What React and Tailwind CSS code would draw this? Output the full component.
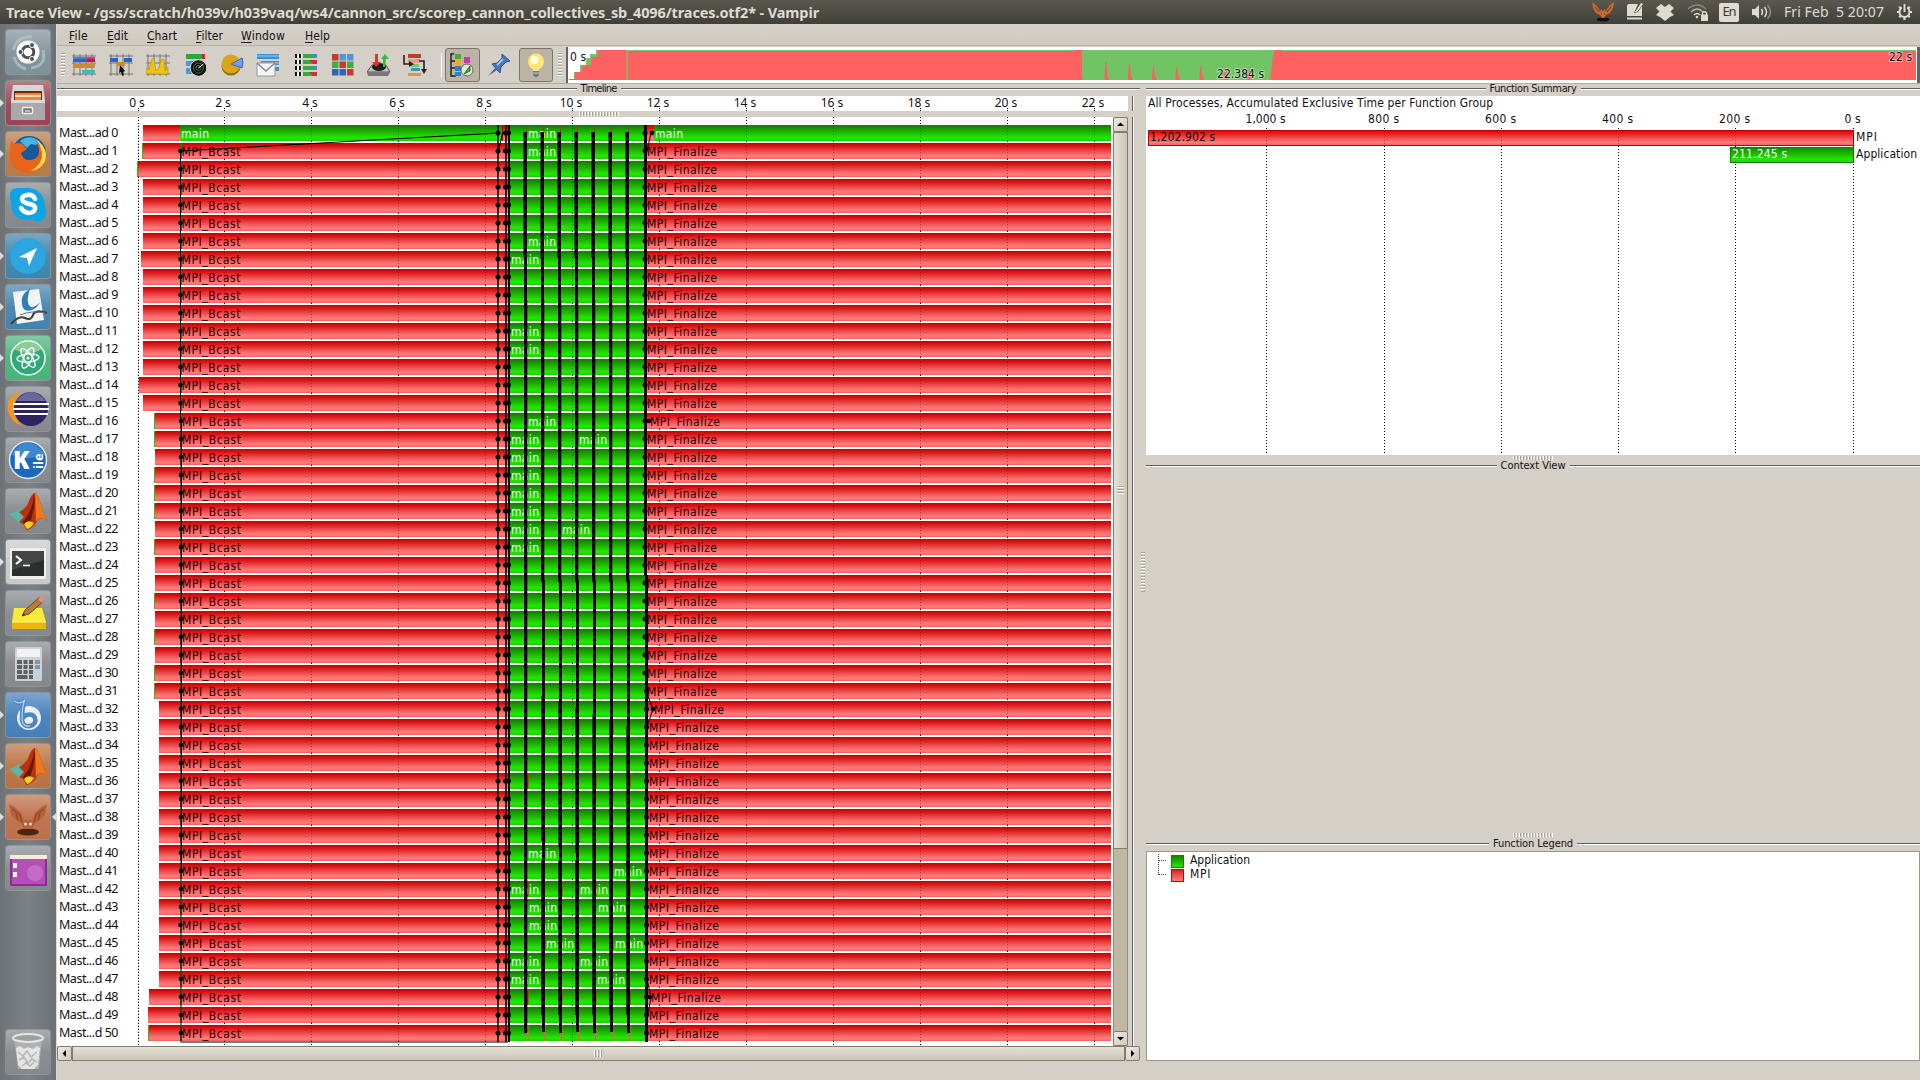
import React, { useLayoutEffect, useRef } from "react";

const UI = "font-['DejaVu_Sans_Condensed','DejaVu_Sans',sans-serif]";

/* One line of text whose letter spacing is adjusted so that it spans w pixels. */
function Fit({ w, className = "", children }) {
  const ref = useRef(null);
  useLayoutEffect(() => {
    const el = ref.current;
    el.style.letterSpacing = "0px";
    const n = el.textContent.length;
    el.style.letterSpacing = (w - el.getBoundingClientRect().width) / n + "px";
  }, [w]);
  return (
    <span ref={ref} className={"inline-block whitespace-pre " + className}>
      {children}
    </span>
  );
}

/* ---------- top panel ---------- */
function TopBar() {
  return (
    <header className="flex h-6 shrink-0 items-center justify-between bg-gradient-to-b from-[#5a584e] to-[#403f39] pl-1.5 pr-[7px] font-['Noto_Sans',sans-serif] text-[#dfdbd2]">
      <Fit w={813} className="text-[14.5px] leading-6 font-bold">
        Trace View - /gss/scratch/h039v/h039vaq/ws4/cannon_src/scorep_cannon_collectives_sb_4096/traces.otf2* - Vampir
      </Fit>
      <div className="flex h-6 items-center">
        <svg width="22" height="20" viewBox="0 0 22 20">
          <ellipse cx="11" cy="17.5" rx="6.500" ry="2" fill="#15130f" />
          <path d="M0 0q2 2 4 3l3 4 1 3 1-3 2 2 2-2 1 3 1-3 3-4 4-3-1 6-3 5-4 2-2 3h-2l-2-3-4-2-3-5z" fill="#c96a33" />
          <path d="M3 5l4 5M19 5l-4 5M9 12h1M12 12h1" stroke="#7c3713" />
        </svg>
        <svg className="ml-[11px]" width="20" height="20" viewBox="0 0 20 20">
          <path d="M4 2h9l-4 9 4-1 4-6v10H2V4q0-2 2-2z" fill="#dfdbd2" />
          <path d="M10 10l6-9 2 1-6 8z" fill="#dfdbd2" />
          <path d="M2 16.500h15" stroke="#dfdbd2" strokeWidth="2" />
        </svg>
        <svg className="ml-[11px]" width="18" height="18" viewBox="0 0 18 18">
          <path d="M5 1l4 3 4-3 5 4-3.500 3.500L18 12l-4 2-5 4-5-4-4-2 3.500-3.500L0 5z" fill="#dfdbd2" />
        </svg>
        <svg className="ml-[14px]" width="21" height="18" viewBox="0 0 21 18">
          <g fill="none" stroke="#8b887f" strokeWidth="1.600">
            <path d="M0 6Q9-2 18 6" />
            <path d="M3 9q6-6 12 0" stroke="#b9b5ab" />
            <path d="M6 12q3-3 6 0" stroke="#dfdbd2" />
          </g>
          <circle cx="9" cy="14" r="1.300" fill="#dfdbd2" />
          <path d="M13 11.500h7V18h-7z" fill="#dfdbd2" />
          <path d="M14.500 12v-2q2-2.500 4 0v2" fill="none" stroke="#dfdbd2" strokeWidth="1.300" />
        </svg>
        <span className="ml-[10px] flex h-[19px] w-5 items-center justify-center rounded-[2px] bg-[#dfdbd2] text-[13px] text-[#3c3b37]">
          <Fit w={13}>En</Fit>
        </span>
        <svg className="ml-3" width="21" height="18" viewBox="0 0 21 18">
          <path d="M1 6h3l4-4v14l-4-4H1z" fill="#dfdbd2" />
          <g fill="none" stroke="#dfdbd2" strokeWidth="1.500">
            <path d="M10.500 6q2 3 0 6" />
            <path d="M13.500 4q4 5 0 10" />
            <path d="M16.500 2q6 7 0 14" stroke="#8b887f" />
          </g>
        </svg>
        <Fit w={100} className="ml-3 text-[14px] leading-6">Fri Feb  5 20:07</Fit>
        <svg className="ml-3" width="17" height="18" viewBox="0 0 17 18">
          <circle cx="8.500" cy="9" r="5" fill="none" stroke="#dfdbd2" strokeWidth="2" />
          <path d="M8.500 14v3M1 9h2M14 9h2M3.200 3.700l1.500 1.500M12.300 12.800l1.500 1.500M3.200 14.300l1.500-1.500M12.300 5.200l1.500-1.500" stroke="#dfdbd2" strokeWidth="2.200" />
          <path d="M8.500 1v8" stroke="#47463f" strokeWidth="5" />
          <path d="M8.500 1v8" stroke="#dfdbd2" strokeWidth="2" />
        </svg>
      </div>
    </header>
  );
}

/* ---------- launcher ---------- */
const matlab = (
  <g>
    <path d="M3 25l12-5 7 6-9 8-4-4z" fill="#5bb5a8" />
    <path d="M13 23q8-4 10-11 3-8 6-8 3 0 6 12 3 12 7 17-8-8-12 1-5 7-10 7-1-6-7-8l5-5z" fill="#b8330c" />
    <path d="M29 4q3 0 6 12 3 12 7 17-8-8-12 0z" fill="#f07a1a" />
    <path d="M28 6q-1 15-11 27l4 7q7-14 8-30z" fill="#6d1608" />
    <path d="M18 35l3 5q4-1 7-6-6-4-10 1z" fill="#ffcf1a" />
  </g>
);

const bat = (
  <g>
    <ellipse cx="22" cy="37" rx="11" ry="3.500" fill="#4d2410" />
    <path d="M3 9q8 4 12 9l3 8 2-2 2 2 2-2 2 2 3-8q4-5 12-9-1 8-3 12l-5 5-4 2-3 6h-8l-3-6-4-2-5-5Q4 17 3 9z" fill="#b5613a" />
    <path d="M6 14l8 6 2 7M38 14l-8 6-2 7M10 19l2 6M34 19l-2 6" stroke="#8f4525" strokeWidth="1.200" fill="none" />
    <circle cx="19.500" cy="29" r="1.500" fill="#f0d8c8" />
    <circle cx="24.500" cy="29" r="1.500" fill="#f0d8c8" />
  </g>
);

const LAUNCHER = [
  { bg: "bg-[#80919a]", icon: (
    <g>
      <path d="M7 20Q12 5 26 7M37 20q4 16-12 18M8 27q3 10 12 12" stroke="#b9c5ca" strokeWidth="3" fill="none" opacity=".7" />
      <circle cx="22" cy="22" r="11.500" fill="#fff" />
      <circle cx="22" cy="22" r="5.800" fill="none" stroke="#4e5052" strokeWidth="3" />
      <g fill="#4e5052" stroke="#fff"><circle cx="14.500" cy="22" r="2.500" /><circle cx="26" cy="15" r="2.500" /><circle cx="26" cy="29" r="2.500" /></g>
    </g>) },
  { bg: "bg-[#9c4454]", run: true, icon: (
    <g>
      <path d="M7 4h30l2 15H5z" fill="#d5d5d5" />
      <path d="M8 10h28v10H8z" fill="#6b2710" />
      <path d="M9 12h26v8H9z" fill="#f08432" /><path d="M9 15h26" stroke="#ffe0c0" strokeWidth="2" />
      <path d="M5 19h34v20H5z" fill="#a9a9a9" /><path d="M5 19h34v3H5z" fill="#d9d9d9" />
      <rect x="16.500" y="26.500" width="10" height="6" rx="1" fill="#777" stroke="#eee" strokeWidth="1.500" /><path d="M19 30h5" stroke="#fff" />
    </g>) },
  { bg: "bg-[#b77a49]", run: true, icon: (
    <g>
      <circle cx="23" cy="21" r="17" fill="#155a9a" />
      <path d="M14 9q10-8 20 1l-4 3-5-1-4 4z" fill="#45b5e6" />
      <path d="M5 9l4 3q3-2 7 0l5 5-6 4q2 8 10 7 8-1 8-9 0-6-4-10 12 7 10 19-3 13-17 13Q7 40 4 27q-1-9 1-18z" fill="#e8641a" />
      <path d="M31 8q12 9 8 21-4 9-14 10 12-7 11-18-1-7-5-13z" fill="#ffd84a" />
    </g>) },
  { bg: "bg-[#85898c]", icon: (
    <g>
      <path d="M13 5q-9-1-9 8 0 4 1 7 0 16 16 17 3 0 4-1 8 6 13-1 4-5 1-10Q39 7 23 5z" fill="#0da5e6" />
      <path d="M29 16q-2-5-8-4-5 1-5 4 0 3 7 5 7 1 6 5-1 4-7 4-5-1-7-5" fill="none" stroke="#fff" strokeWidth="4.500" strokeLinecap="round" />
    </g>) },
  { bg: "bg-[#3f84ab]", run: true, icon: (
    <g><circle cx="22" cy="22" r="18" fill="#2ca5e0" /><path d="M13 23l18-9-8 18-2-8z" fill="#fff" /></g>) },
  { bg: "bg-[#4384ad]", run: true, icon: (
    <g>
      <path d="M7 7l26-3 5 31-27 4z" fill="#f2f4f4" />
      <path d="M24 4q-10 5-8 16 2 8 10 5 6-3 8-8-5 6-9 5-6-3-1-18z" fill="#2f7fb8" />
      <path d="M5 39q8-9 14-6t8-3 14-2" fill="none" stroke="#38424a" strokeWidth="2.200" /><path d="M14 30q12-5 25-2" fill="none" stroke="#68747c" />
    </g>) },
  { bg: "bg-[#46b579]", run: true, icon: (
    <g>
      <circle cx="22" cy="22" r="17" fill="#30a877" stroke="#f1fff2" strokeWidth="1.500" />
      <path d="M8 13Q22-2 36 13q-14 8-28 0z" fill="#cbe5ae" opacity=".6" />
      <g fill="none" stroke="#fff" strokeWidth="1.300">
        <ellipse cx="22" cy="22" rx="4" ry="11" transform="rotate(25 22 22)" /><ellipse cx="22" cy="22" rx="4" ry="11" transform="rotate(-35 22 22)" /><ellipse cx="22" cy="22" rx="4" ry="11" transform="rotate(85 22 22)" />
      </g>
      <circle cx="22" cy="22" r="1.500" fill="#fff" />
    </g>) },
  { bg: "bg-[#85898c]", icon: (
    <g>
      <path d="M16 4q-17 6-14 20 3 12 15 15-9-7-9-18 0-11 8-17z" fill="#f7941e" />
      <circle cx="25" cy="22" r="17" fill="#2f2260" /><path d="M10 14q15-18 30 0z" fill="#6a6a9a" />
      <path d="M7 17h36M7 22h36M8 27h34" stroke="#fff" strokeWidth="2.200" />
    </g>) },
  { bg: "bg-[#85898c]", icon: (
    <g>
      <circle cx="22" cy="22" r="18.500" fill="#1b68bd" stroke="#dce8f4" strokeWidth="1.500" />
      <path d="M5 16q17-23 34 0-17 8-34 0z" fill="#5a9de0" opacity=".6" />
      <text x="7" y="31" fill="#fff" fontFamily="Open Sans, sans-serif" fontWeight="800" fontSize="24">K</text>
      <text x="37" y="31" transform="rotate(-90 37 31)" fill="#fff" fontFamily="Open Sans, sans-serif" fontWeight="700" fontSize="13">ile</text>
    </g>) },
  { bg: "bg-[#85898c]", icon: matlab },
  { bg: "bg-[#c9c9c9]", run: true, icon: (
    <g>
      <rect x="4" y="8" width="36" height="31" rx="1" fill="#efefef" /><rect x="6" y="11" width="32" height="25" fill="#2c2e2e" />
      <path d="M6 11h32v9L6 30z" fill="#444646" />
      <path d="M10 16l5 4-5 4" fill="none" stroke="#fff" strokeWidth="2" /><path d="M17 25.500h7" stroke="#fff" strokeWidth="1.600" />
    </g>) },
  { bg: "bg-[#85898c]", icon: (
    <g>
      <path d="M8 17h28l4 14H6z" fill="#f8ea3b" /><path d="M6 31h34v7H6z" fill="#e9b60f" /><path d="M6 31h34" stroke="#fff685" />
      <path d="M16 25l3-6L34 6l4 4-15 13z" fill="#b97b36" stroke="#6f4718" /><path d="M32 8l3-3 4 4-3 3z" fill="#e68a8a" /><path d="M16 25l1.500-3 1.500 1.500z" fill="#222" />
    </g>) },
  { bg: "bg-[#85898c]", icon: (
    <g>
      <rect x="9" y="5" width="27" height="34" rx="1.500" fill="#d0d0d0" /><rect x="11" y="7" width="23" height="8" fill="#f2f2f2" />
      <g fill="#5b6064">
        <path d="M11 18h5v4h-5zM17.500 18h4v4h-4zM23 18h4v4h-4zM11 23h5v4h-5zM17.500 23h4v4h-4zM23 23h4v4h-4zM11 28h5v4h-5zM17.500 28h4v4h-4zM23 28h4v4h-4zM11 33h10.500v4H11zM23 33h4v4h-4z" />
      </g>
      <path d="M29 18h5v4h-5zM29 23h5v4h-5z" fill="#7b98a8" /><path d="M29 28h5v9h-5z" fill="#bcd3e0" />
    </g>) },
  { bg: "bg-[#457fbb]", run: true, icon: (
    <g>
      <circle cx="23" cy="25" r="12" fill="#e8eef4" />
      <path d="M8 8q6 4 11-1-3 5-3 20 1 7 8 6 7-2 5-8-2-5-9-3l-3 3" fill="none" stroke="#4e86c2" strokeWidth="4.500" />
      <path d="M8 8q6 4 11-1-3 5-3 20 1 7 8 6" fill="none" stroke="#b9d4ee" strokeWidth="1.200" />
    </g>) },
  { bg: "bg-[#bb7242]", run: true, icon: matlab },
  { bg: "bg-[#bd6f49]", run: true, active: true, icon: bat },
  { bg: "bg-[#85898c]", icon: (
    <g>
      <rect x="4" y="9" width="37" height="31" rx="1.500" fill="#8e2b93" /><rect x="6" y="13" width="33" height="25" fill="#b44fb8" />
      <circle cx="29" cy="27" r="8" fill="#cf7ecf" opacity=".6" /><path d="M4 9h37v4H4z" fill="#f1ecdc" /><path d="M7 17h4v5H7zM7 26h4v5H7z" fill="#fff" />
    </g>) },
];

const trash = (
  <g>
    <path d="M8 8h28l-3 31H12z" fill="#b5b8ba" opacity=".8" />
    <path d="M10 18l4-2 4 3 4-2 5 2 4-3 3 2-2 17-4 4H16l-4-4z" fill="#e4e4e2" />
    <path d="M12 22l5 4 4-5 4 6 6-5M13 30l5-3 4 6 4-4 5 3M16 36l4-3 4 3 4-4" stroke="#b5b5b2" fill="none" strokeWidth="1.500" />
    <ellipse cx="22" cy="8" rx="15" ry="4" fill="#9da0a2" stroke="#e4e6e6" strokeWidth="2" />
  </g>
);

function Tile({ item }) {
  return (
    <div className="flex h-11 items-center">
      <span className="w-1.5 shrink-0">
        {item.run && <svg width="4" height="8" viewBox="0 0 4 8"><path d="M0 0l4 4-4 4z" fill="#dcdcdc" /></svg>}
      </span>
      <span className={"h-11 w-11 shrink-0 rounded-[3px] shadow-[0_0_1px_1px_rgba(255,255,255,0.22)] " + item.bg}>
        <span className="block h-11 w-11 rounded-[3px] bg-gradient-to-b from-white/30 via-white/5 to-transparent">
          <svg width="44" height="44" viewBox="0 0 44 44">{item.icon}</svg>
        </span>
      </span>
      <span className="ml-0.5 w-1">
        {item.active && <svg width="4" height="8" viewBox="0 0 4 8"><path d="M4 0L0 4l4 4z" fill="#dcdcdc" /></svg>}
      </span>
    </div>
  );
}

function Launcher() {
  return (
    <nav className="flex w-[57px] shrink-0 flex-col justify-between border-r border-[#dcd8d0] bg-gradient-to-r from-[#6c7275] via-[#7b8184] to-[#6b7174] pt-1.5 pb-1.5">
      <div className="flex flex-col gap-[7px]">
        {LAUNCHER.map((item, i) => <Tile key={i} item={item} />)}
      </div>
      <Tile item={{ bg: "bg-[#85898c]", icon: trash }} />
    </nav>
  );
}

/* ---------- menu and tool bar ---------- */
const MENU = [["File", 19, "ml-3"], ["Edit", 21, "ml-[19px]"], ["Chart", 30, "ml-[19px]"], ["Filter", 27, "ml-[19px]"], ["Window", 44, "ml-[18px]"], ["Help", 25, "ml-[20px]"]];

function MenuBar() {
  return (
    <div className={"flex h-[22px] shrink-0 items-center border-b border-[#b8b2a4] bg-gradient-to-b from-[#d6d2ca] to-[#cfcac0] pt-0.5 text-[12px] text-[#111] " + UI}>
      {MENU.map(([t, w, m]) => (
        <Fit key={t} w={w} className={m}><span className="underline underline-offset-2">{t[0]}</span>{t.slice(1)}</Fit>
      ))}
    </div>
  );
}

const mesh = <path d="M2 1v22M8 1v22M14 1v22M20 1v22M0 3h24M0 10h24M0 21h24" stroke="#777" strokeWidth="1" />;
const TOOLS = [
  ["ml-[7px]", <g>{mesh}<path d="M1 4h15v5H1z" fill="#2a64c8" /><path d="M15 4h8v5h-8z" fill="#cc1830" /><path d="M1 11h22v4H1z" fill="#c98b2e" /><path d="M10 17h13v4H10z" fill="#38bcbc" /><path d="M1 5h22" stroke="#fff" opacity=".35" /></g>],
  ["ml-[13px]", <g>{mesh}<path d="M1 5h8v4H1zM15 5h8v4h-8z" fill="#2a64c8" /><path d="M8 9h8v4H8z" fill="#d28b27" /><path d="M11 12l5 6-2 1 1 3-2 1-1-4-2 1z" fill="#111" /></g>],
  ["ml-[13px]", <g>{mesh}<path d="M0 21v-6l3 2 2-8q3-10 4 4l1 5 3-3 2-8 3-1 1 12 3-4v7z" fill="#f0c40c" stroke="#bb900c" strokeWidth=".7" /></g>],
  ["ml-[15px]", <g><path d="M1 1h16v5H1z" fill="#1fae33" /><path d="M17 1h3v5h-3z" fill="#d22" /><path d="M1 8h8v5H1zM1 15h7v6H1z" fill="#4f98d8" /><circle cx="13.500" cy="15" r="8.300" fill="#111" stroke="#d5d9d5" /><g fill="none" stroke="#387048"><circle cx="13.500" cy="15" r="5" /><circle cx="13.500" cy="15" r="2.500" /></g><path d="M13.500 15l5-4" stroke="#fff" /></g>],
  ["ml-[11px]", <g><circle cx="11" cy="13" r="9.500" fill="#8c6b0b" /><circle cx="11" cy="11" r="9.500" fill="#d9a615" /><path d="M11 11l11-6q2 4 0 10z" fill="#6d9bf5" stroke="#3d62bb" /></g>],
  ["ml-[12px]", <g><path d="M1 1h22v5H1z" fill="#3c8fd3" /><path d="M5 8h18v4H5zM12 14h11v4H12z" fill="#3c8fd3" /><path d="M1 3h22M5 10h18" stroke="#9fd0f5" /><path d="M1 10h18v13H1z" fill="#f5f5f5" stroke="#999" /><path d="M1 10l9 8 9-8" fill="none" stroke="#888" strokeWidth="1.500" /></g>],
  ["ml-[14px]", <g>{[0, 6, 12, 18].map((y) => <g key={y}><path d={`M1 ${y + 1}h7v4H1z`} fill="#fff" /><path d={`M1 ${y + 1}h2v4H1zM5 ${y + 1}h2v4H5z`} fill="#111" /><path d={`M9 ${y + 1}h11v4H9z`} fill="#2fae3c" /><path d={`M${y % 12 ? 15 : 19} ${y + 1}H23v4h-4z`} fill={y % 12 ? "#d92b2b" : "#3c8fd3"} /></g>)}</g>],
  ["ml-[13px]", <g>{["#c93a2e", "#4f98d8", "#4f98d8", "#3fae3c", "#c93a2e", "#3fae3c", "#2b68b8", "#2b68b8", "#c93a2e"].map((c, i) => <rect key={i} x={1 + (i % 3) * 7.500} y={1 + Math.floor(i / 3) * 7.500} width="6.500" height="6.500" fill={c} />)}</g>],
  ["ml-[12px]", <g><path d="M5 12h14l4 7H0z" fill="#c2c2c2" stroke="#555" /><path d="M0 19h23l-2 4H1z" fill="#777" /><ellipse cx="12" cy="14" rx="7" ry="4" fill="#1c1c1c" /><path d="M8 1h3v8h3l-5 5-4-5h3z" fill="#d33c2b" /><path d="M18 1l4 5h-3l-1 8h-2V6h-2z" fill="#39bb35" /></g>],
  ["ml-[12px]", <g><path d="M5 1h13v4H5z" fill="#c93a2e" /><path d="M5 6h12v4H5z" fill="#e89890" /><path d="M8 11h8v3H8z" fill="#70cf58" /><path d="M8 15h9v3H8z" fill="#3c8fd3" /><path d="M5 20h13v3H5z" fill="#d7975c" /><path d="M1 2v9h7M16 8h5v11" fill="none" stroke="#222" strokeWidth="1.600" /><path d="M6 8l5 3-5 3zM18 16h6l-3 5z" fill="#222" /></g>],
];

function Tool({ children, className = "" }) {
  return <svg className={"shrink-0 " + className} width="24" height="24" viewBox="0 0 24 24">{children}</svg>;
}

const OVERVIEW_SPIKES = [[1106, 62], [1129.5, 64], [1153.5, 66], [1177, 67], [1201, 66], [1225, 68], [1249, 70]];

function Overview() {
  return (
    <svg className="shrink-0 self-end" width="1354" height="36" viewBox="566 47 1354 36">
      <path d="M568 47h1352v36H568z" fill="#fff" />
      <path d="M569 80v-1h5v-7h6v-7h6v-7h4v-4h6v-4h1320v30z" fill="#71c464" />
      <path d="M569 80v-1h6v-7h7v-7h9v-8h6.500v-7h29v30zM628 80V51h446v-1h8v26l1 4zM1270 80l1-8 2-16 2-6h7v1h634v29z" fill="#ff6161" />
      {OVERVIEW_SPIKES.map(([x, y]) => <path key={x} d={`M${x - 1.500} 80V74l1-${74 - y}h1l1 ${77 - y}h1.500V80z`} fill="#ff6161" />)}
      <path d="M566 47h2v36h-2zM1917 47h3v36h-3z" fill="#636363" />
      <g fontFamily="DejaVu Sans Condensed, DejaVu Sans, sans-serif" fontSize="12" fill="#111" stroke="#fff" strokeOpacity=".45" strokeWidth="2" paintOrder="stroke">
        <text x="570" y="61" textLength="16">0 s</text>
        <text x="1217" y="78" textLength="47">22.384 s</text>
        <text x="1889" y="61" textLength="23">22 s</text>
      </g>
    </svg>
  );
}

function Grip({ className }) {
  return <span className={"bg-[repeating-linear-gradient(to_right,#fff_0_1px,#a8a296_1px_2px,#d4cfc7_2px_3px)] " + className} />;
}
function GripV({ className }) {
  return <span className={"bg-[repeating-linear-gradient(to_bottom,#a8a296_0_1px,#fff_1px_2px,#d4cfc7_2px_3px)] " + className} />;
}

function ToolBar() {
  return (
    <div className="flex h-[38px] shrink-0 items-center border-b border-[#b3ada0]">
      <GripV className="ml-1 h-6 w-1" />
      {TOOLS.map(([m, icon], i) => <Tool key={i} className={m}>{icon}</Tool>)}
      <span className="ml-3.5 h-6 w-px bg-white" />
      <span className="ml-[3px] flex h-[34px] w-[35px] items-center justify-center rounded-[3px] border border-[#7c7565] bg-[#bbb4a6]">
        <Tool>
          <path d="M4 1H1v22h5M1 8h4M1 15h4" fill="none" stroke="#222" strokeWidth="1.500" />
          <path d="M5 1h6v5H5z" fill="#3fae3c" /><path d="M5 7h6v5H5z" fill="#f5a623" /><path d="M5 13h6v5H5zM5 19h6v4H5z" fill="#2b84c8" />
          <path d="M14 4h6v6h-6z" fill="#c63ba5" /><circle cx="17" cy="17" r="6" fill="#e7e7d9" stroke="#666" /><path d="M14 21l6-8v5z" fill="#3fae3c" stroke="#178a10" />
        </Tool>
      </span>
      <Tool className="ml-[7px]">
        <path d="M1 23l7-8 2 2z" fill="#667" />
        <path d="M5 11l5-1 5-5 0-4 8 7-4 1-5 5-1 6z" fill="#4a78b8" stroke="#28508a" /><path d="M10 12l6-6" stroke="#a8c6ea" strokeWidth="2" />
      </Tool>
      <span className="ml-[8px] flex h-[34px] w-[35px] items-center justify-center rounded-[3px] border border-[#7c7565] bg-[#bbb4a6]">
        <Tool>
          <circle cx="12" cy="8.500" r="8" fill="#ffe872" /><path d="M8 13h8l-1 5H9z" fill="#ffe08a" /><circle cx="10.500" cy="7" r="4" fill="#fffbdc" /><path d="M9 18h6v4l-2 2h-2l-2-2z" fill="#777" /><path d="M9 20h6" stroke="#ccc" />
        </Tool>
      </span>
      <GripV className="ml-[5px] mr-[4px] h-6 w-1" />
      <Overview />
    </div>
  );
}

/* ---------- panel captions ---------- */
function Caption({ children, w }) {
  return (
    <div className={"flex h-3 shrink-0 items-start text-[11px] leading-3 text-[#111] " + UI}>
      <span className="mt-1 h-[2px] flex-1 border-t border-b border-t-[#5f5f5f] border-b-white" />
      <span className="mx-1 -mt-px flex"><Fit w={w}>{children}</Fit></span>
      <span className="mt-1 h-[2px] flex-1 border-t border-b border-t-[#5f5f5f] border-b-white" />
    </div>
  );
}

/* ---------- timeline ---------- */
const TICKS = [138, 224, 311, 398, 485, 572, 659, 746, 833, 920, 1007, 1094];
const ROWS = Array.from({ length: 51 }, (_, i) => i);
const EARLY = { 2: 138, 7: 141, 8: 143, 14: 139, 48: 149, 49: 148, 50: 149 };
const rowStart = (r) => EARLY[r] ?? (r < 16 ? 143 : r < 32 ? 155 : 159);
const GREEN_EDGE = [1, 2, 16, 17, 19, 20, 21, 23, 26, 28, 30, 31, 50];
const MAINS = { 0: [528], 1: [528], 6: [528], 7: [511], 11: [511], 12: [511], 16: [528], 17: [511, 579], 18: [511], 19: [511], 20: [511], 21: [511], 22: [511, 562], 23: [511], 40: [528], 41: [614], 42: [511, 580], 43: [529, 598], 44: [529], 45: [546, 615], 46: [511, 580], 47: [511, 597] };
const FINAL_X = { 16: 650, 32: 654, 48: 651 };
const STRIPES = [525, 542, 559, 576, 593, 610, 627];

function Grid({ y1, y2, opacity = 1 }) {
  return TICKS.map((x) => <path key={x} d={`M${x + 0.5} ${y1}V${y2}`} stroke="#000" strokeDasharray="1 2" opacity={opacity} />);
}

function TimelineChart() {
  const top = (r) => 125 + 18 * r;
  return (
    <svg className="shrink-0" width="978" height="929" viewBox="135 117 978 929">
      <defs>
        <linearGradient id="mpi" x1="0" y1="0" x2="0" y2="1"><stop offset="0" stopColor="#cb0000" /><stop offset=".1" stopColor="#d40606" /><stop offset=".8" stopColor="#ff7a7a" /><stop offset=".9" stopColor="#ff7272" /><stop offset="1" stopColor="#f45c5c" /></linearGradient>
        <linearGradient id="app" x1="0" y1="0" x2="0" y2="1"><stop offset="0" stopColor="#167c00" /><stop offset=".1" stopColor="#178500" /><stop offset=".8" stopColor="#22e800" /><stop offset="1" stopColor="#1fd000" /></linearGradient>
      </defs>
      <Grid y1={117} y2={1046} />
      {ROWS.map((r) => {
        const y = top(r);
        const x0 = rowStart(r);
        return (
          <g key={r}>
            <rect x={x0} y={y} width={1111 - x0} height="16" fill="url(#mpi)" />
            {r === 0 && <rect x="180" y={y} width="323" height="16" fill="url(#app)" />}
            {r === 0 && <rect x="654" y={y} width="457" height="16" fill="url(#app)" />}
            <rect x={r ? 509 : 510} y={y} width={r ? 136 : 134} height="16" fill="url(#app)" />
            {GREEN_EDGE.includes(r) && <rect x={x0 - 1} y={y} width="1" height="16" fill="#22c400" />}
            {r > 0 && <rect x="180" y={y} width="2" height="16" fill="#138000" />}
            {STRIPES.map((x, i) => (r === 0 || r === 50 || (r * 7 + i * 3) % 6 === 0) && (
              <rect key={x} x={x + (r > 30 ? 2 : 1)} y={y} width={r > 30 ? 1.5 : 1} height="16" fill={r === 50 ? "#f06040" : "#d02010"} />
            ))}
          </g>
        );
      })}
      <Grid y1={125} y2={1041} opacity={0.3} />
      <path d="M180.500 151L498 133M180.500 151v267M181.500 418v455" stroke="#000" fill="none" />
      <path d="M181 418V1042M180.500 1042H508" stroke="#222" strokeOpacity=".6" strokeWidth="2" fill="none" />
      <g fontFamily="DejaVu Sans Condensed, DejaVu Sans, sans-serif" fontSize="12">
        <text x="181" y="138" fill="#e9ffe4" textLength="28">main</text>
        <text x="655" y="138" fill="#e9ffe4" textLength="28">main</text>
        {ROWS.map((r) => (
          <g key={r}>
            {(MAINS[r] || []).map((x) => <text key={x} x={x} y={top(r) + 13} fill="#e9ffe4" textLength="28">main</text>)}
            {r > 0 && <text x={r < 16 ? 181.500 : 182} y={top(r) + 13} fill="#1a0000" textLength="59">MPI_Bcast</text>}
            {r > 0 && <text x={FINAL_X[r] || (r > 32 ? 649 : 647)} y={top(r) + 13} fill="#1a0000" textLength="70">MPI_Finalize</text>}
          </g>
        ))}
      </g>
      <g fill="#000">
        <rect x="497" y="125" width="2" height="917" opacity=".75" />
        <rect x="505" y="125" width="2" height="917" opacity=".8" />
        <rect x="508" y="125" width="2" height="917" />
        <rect x="502" y="125" width="1" height="16" fill="#a00" />
        {STRIPES.map((x, i) => (
          <g key={x}>
            <rect x={x - 1} y="132" width="3" height="450" />
            <rect x={x - (i === 0 ? 1 : 0)} y="580" width="3" height={i % 2 ? 452 : 453} />
            <rect x={x - 2} y="132" width="1" height="126" opacity=".5" />
            <rect x={x - 1} y={690 + i * 6} width="1" height="145" opacity=".6" />
            <rect x={x - 1} y="860" width="1" height="155" opacity=".7" />
            <rect x={x + 2} y="300" width="1" height="732" opacity=".3" />
          </g>
        ))}
        <rect x="644" y="125" width="3" height="450" />
        <rect x="645" y="575" width="3" height="467" />
        <path d="M502.500 133l-4 18M651 133l-4 18M646 691l7 18-6 18M647 979l4 18-3 18" stroke="#000" fill="none" />
        {ROWS.map((r) => (
          <g key={r}>
            <circle cx="498" cy={top(r) + 8} r="2.500" />
            <circle cx="505.500" cy={top(r) + 8} r="2.500" />
            <circle cx="508.500" cy={top(r) + 8} r="2.500" />
            <circle cx={r > 30 ? 646.5 : 645} cy={top(r) + 8} r="2.500" />
            {r > 0 && <circle cx={r < 16 || r === 44 ? 180.5 : 181} cy={top(r) + 8} r="2.300" />}
          </g>
        ))}
        <circle cx="652" cy="133" r="2.300" />
        <circle cx="649" cy="421" r="2.300" />
        <circle cx="653" cy="709" r="2.300" />
        <circle cx="650" cy="997" r="2.300" />
      </g>
    </svg>
  );
}

function ArrowButton({ d }) {
  return (
    <span className="flex h-[15px] w-[15px] shrink-0 items-center justify-center rounded-[2px] border border-[#827c6c] bg-gradient-to-br from-[#eeebe4] to-[#cfcabd]">
      <svg width="7" height="7" viewBox="0 0 7 7"><path d={d} fill="#000" /></svg>
    </span>
  );
}

const LABEL = (t) => (t < 10 ? "Mast...ad " : "Mast...d ") + t;

function TimelinePanel() {
  return (
    <section className="flex w-[1083px] shrink-0 flex-col">
      <Caption w={36}>Timeline</Caption>
      <div className="flex h-[15px] shrink-0">
        <svg width="1071" height="15" viewBox="57 96 1071 15" className="overflow-visible bg-white">
          <g fontFamily="Noto Sans, sans-serif" fontSize="12" textAnchor="middle" fill="#111">
            {TICKS.map((x, i) => <text key={x} x={x - 1} y="107">{i * 2} s</text>)}
          </g>
          {TICKS.map((x) => <path key={x} d={`M${x + 0.5} 108v3`} stroke="#000" strokeDasharray="1 1" />)}
        </svg>
        <span className="ml-1 w-0.5 border-l border-r border-l-[#5f5f5f] border-r-white" />
      </div>
      <div className="flex h-1.5 shrink-0 items-center justify-center"><Grip className="h-1 w-10" /></div>
      <div className="flex h-[929px] shrink-0">
        <ul className="flex w-[78px] shrink-0 flex-col bg-white pt-[7px] pl-0.5 font-['Noto_Sans',sans-serif] text-[12.5px] leading-[18px] text-[#111]">
          {ROWS.map((r) => <li key={r} className="h-[18px]"><Fit w={59}>{LABEL(r)}</Fit></li>)}
        </ul>
        <div className="bg-white"><TimelineChart /></div>
        <div className="flex w-[15px] shrink-0 flex-col bg-[#bfb6a3]">
          <ArrowButton d="M0 5h7L3.500 1.500z" />
          <span className="flex h-[717px] items-center justify-center border border-[#827c6c] bg-gradient-to-r from-[#e4e1d8] to-[#cbc6b9]">
            <GripV className="h-[9px] w-[7px]" />
          </span>
          <span className="flex-1 border-x border-[#958d7c]" />
          <ArrowButton d="M0 2h7L3.500 5.500z" />
        </div>
        <span className="ml-1 w-0.5 border-l border-r border-l-[#5f5f5f] border-r-white" />
      </div>
      <div className="flex h-[15px] shrink-0">
        <ArrowButton d="M5 0v7L1.500 3.500z" />
        <span className="flex flex-1 items-center justify-center border border-[#827c6c] bg-gradient-to-b from-[#e4e1d8] to-[#cbc6b9]">
          <Grip className="h-[7px] w-[9px]" />
        </span>
        <ArrowButton d="M2 0v7l3.500-3.500z" />
      </div>
    </section>
  );
}

/* ---------- right column ---------- */
const SUMMARY = [[1266.5, "1,000 s", 40], [1384.5, "800 s", 31], [1501.5, "600 s", 31], [1618.5, "400 s", 31], [1735.5, "200 s", 31], [1853.5, "0 s", 16]];

function SummaryChart() {
  return (
    <svg className="shrink-0 bg-white" width="774" height="359" viewBox="1146 96 774 359">
      <defs>
        <linearGradient id="sm" x1="0" y1="0" x2="0" y2="1"><stop offset="0" stopColor="#d00" /><stop offset=".8" stopColor="#ff7a7a" /><stop offset="1" stopColor="#f45c5c" /></linearGradient>
        <linearGradient id="sa" x1="0" y1="0" x2="0" y2="1"><stop offset="0" stopColor="#178500" /><stop offset=".8" stopColor="#22e800" /><stop offset="1" stopColor="#1fd000" /></linearGradient>
      </defs>
      {SUMMARY.map(([x]) => <path key={x} d={`M${x} 128V454`} stroke="#000" strokeDasharray="1 2" />)}
      <rect x="1148.500" y="130.500" width="705" height="15" fill="url(#sm)" stroke="#c00000" />
      <rect x="1730.500" y="147.500" width="123" height="15" fill="url(#sa)" stroke="#168000" />
      {SUMMARY.map(([x]) => <path key={x} d={`M${x} 128V${x > 1730 ? 162 : 146}`} stroke="#000" strokeDasharray="1 2" opacity=".3" />)}
      <g fontFamily="DejaVu Sans Condensed, DejaVu Sans, sans-serif" fontSize="12" fill="#111">
        <text x="1148" y="107" textLength="345">All Processes, Accumulated Exclusive Time per Function Group</text>
        {SUMMARY.map(([x, t, w]) => <text key={t} x={x - w / 2 - 1} y="123" textLength={w}>{t}</text>)}
        <text x="1150" y="141" textLength="65">1,202.902 s</text>
        <text x="1732" y="158" fill="#f2fff0" textLength="55">211.245 s</text>
        <text x="1856" y="141" textLength="21">MPI</text>
        <text x="1856" y="158" textLength="61">Application</text>
      </g>
    </svg>
  );
}

function RightColumn() {
  return (
    <section className="flex flex-1 flex-col">
      <Caption w={87}>Function Summary</Caption>
      <div className="flex"><SummaryChart /></div>
      <div className="flex h-1.5 shrink-0 items-center justify-center"><Grip className="h-1 w-10" /></div>
      <Caption w={65}>Context View</Caption>
      <div className="flex h-[366px] shrink-0 items-end justify-center"><Grip className="mb-0.5 h-1 w-10" /></div>
      <Caption w={80}>Function Legend</Caption>
      <div className={"flex h-[210px] shrink-0 flex-col border border-[#9d9789] bg-white pt-0.5 pl-[11px] text-[12px] text-[#111] " + UI}>
        <div className="flex h-3.5 items-center">
          <svg width="9" height="14" viewBox="0 0 9 14"><path d="M.5 0v14M1 6.500h8" stroke="#444" strokeDasharray="1 1" /></svg>
          <span className="ml-1 h-[13px] w-[13px] border border-[#178000] bg-gradient-to-b from-[#178500] to-[#22e800]" />
          <span className="-mt-0.5 ml-1.5 flex"><Fit w={60} className="leading-[14px]">Application</Fit></span>
        </div>
        <div className="flex h-3.5 items-center">
          <svg width="9" height="14" viewBox="0 0 9 14"><path d="M.5 0v7M1 6.500h8" stroke="#444" strokeDasharray="1 1" /></svg>
          <span className="ml-1 h-[13px] w-[13px] border border-[#c80000] bg-gradient-to-b from-[#d42020] to-[#ff7a7a]" />
          <span className="-mt-0.5 ml-1.5 flex"><Fit w={21} className="leading-[14px]">MPI</Fit></span>
        </div>
      </div>
    </section>
  );
}

export default function App() {
  return (
    <div className="flex h-[1080px] w-[1920px] flex-col overflow-hidden bg-[#d4cfc7]">
      <TopBar />
      <div className="flex min-h-0 flex-1">
        <Launcher />
        <main className="flex min-w-0 flex-1 flex-col">
          <MenuBar />
          <ToolBar />
          <div className="flex min-h-0 flex-1">
            <TimelinePanel />
            <div className="flex w-1.5 shrink-0 flex-col"><GripV className="mt-[468px] ml-px h-10 w-1" /></div>
            <RightColumn />
          </div>
        </main>
      </div>
    </div>
  );
}
